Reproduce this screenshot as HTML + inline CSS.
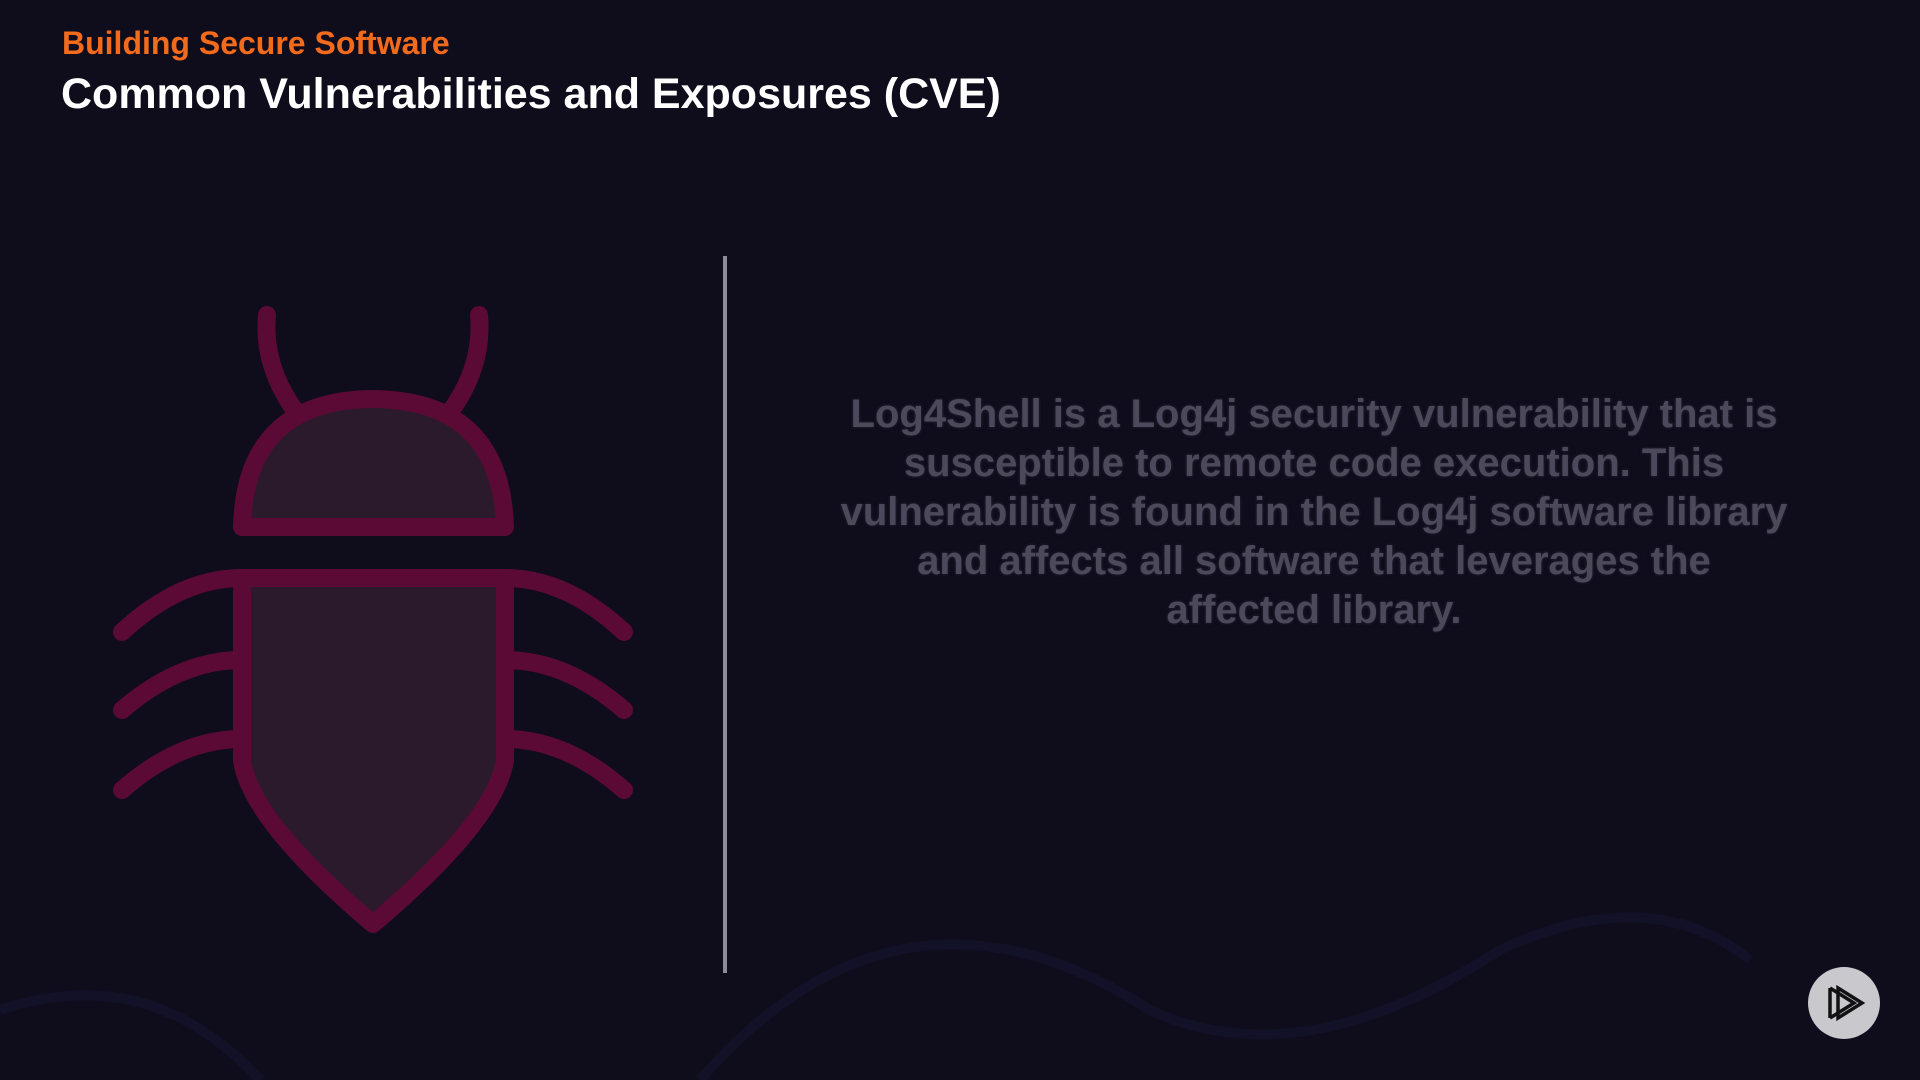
<!DOCTYPE html>
<html><head><meta charset="utf-8"><style>
html,body{margin:0;padding:0;}
body{width:1920px;height:1080px;background:#0f0c1b;position:relative;overflow:hidden;font-family:"Liberation Sans",sans-serif;}
.sub{position:absolute;left:62px;top:25px;color:#f26b1d;font-size:32px;font-weight:bold;}
.title{position:absolute;left:61px;top:70px;color:#fff;font-size:43px;font-weight:bold;}
.div{position:absolute;left:723px;top:256px;width:4px;height:717px;background:#8d8b96;}
.txt{position:absolute;left:838px;top:390px;width:952px;text-align:center;color:#4c4a5a;font-size:40px;line-height:49px;font-weight:bold;text-shadow:0 0 3px #2a2838;}
</style></head><body>
<svg width="1920" height="1080" style="position:absolute;left:0;top:0">
<path d="M0 1010 Q150 960 260 1080" stroke="#131127" stroke-width="10" fill="none"/>
<path d="M700 1080 Q900 850 1150 1010 Q1300 1080 1500 950 Q1650 880 1750 960" stroke="#131127" stroke-width="10" fill="none"/>
<g stroke="#5a0a35" stroke-width="18" stroke-linecap="round" stroke-linejoin="round" fill="none">
<path d="M267 315 Q262 370 302 420"/>
<path d="M479 315 Q484 370 444 420"/>
<path d="M242 527 Q245 400 373 399 Q501 400 505 527 Z" fill="#2a1a2c"/>
<path d="M242 578 L242 760 Q250 820 373 924 Q496 820 505 760 L505 578" fill="#2a1a2c"/>
<path d="M242 578 L505 578"/>
<path d="M122 632 Q180 578 242 578 M505 578 Q566 578 624 632"/>
<path d="M122 710 Q180 660 242 660 M505 660 Q566 660 624 710"/>
<path d="M122 790 Q180 739 242 739 M505 739 Q566 739 624 790"/>
</g>
<circle cx="1844" cy="1003" r="36" fill="#c9c8cd"/>
<g stroke="#111" stroke-width="3.5" fill="none" stroke-linejoin="miter">
<path d="M1830 988 L1830 1018 M1830 988 L1854 1003 L1830 1018"/>
<path d="M1838 988 L1862 1003 L1838 1018 Z"/>
</g>
</svg>
<div class="sub">Building Secure Software</div>
<div class="title">Common Vulnerabilities and Exposures (CVE)</div>
<div class="div"></div>
<div class="txt">Log4Shell is a Log4j security vulnerability that is susceptible to remote code execution. This vulnerability is found in the Log4j software library and affects all software that leverages the affected library.</div>
</body></html>
